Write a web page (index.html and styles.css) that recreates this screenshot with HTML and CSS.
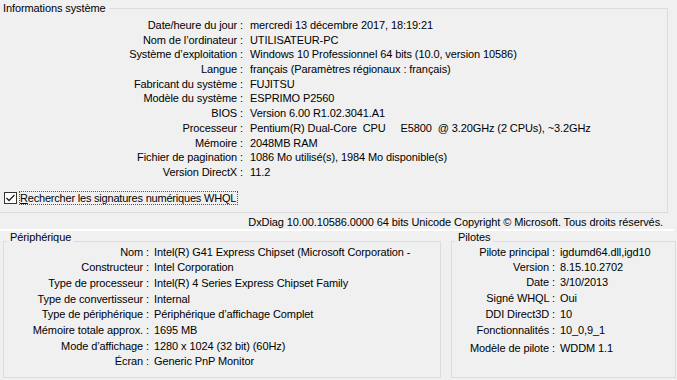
FILE: index.html
```html
<!DOCTYPE html>
<html lang="fr">
<head>
<meta charset="utf-8">
<title>DxDiag</title>
<link rel="stylesheet" href="styles.css">
</head>
<body>
<fieldset class="group group-top">
  <legend class="legend-top">Informations système</legend>
  <div class="grid grid-top">
    <div class="lbl">Date/heure du jour :</div><div class="val">mercredi 13 décembre 2017, 18:19:21</div>
    <div class="lbl">Nom de l’ordinateur :</div><div class="val">UTILISATEUR-PC</div>
    <div class="lbl">Système d’exploitation :</div><div class="val">Windows 10 Professionnel 64 bits (10.0, version 10586)</div>
    <div class="lbl">Langue :</div><div class="val">français (Paramètres régionaux : français)</div>
    <div class="lbl">Fabricant du système :</div><div class="val">FUJITSU</div>
    <div class="lbl">Modèle du système :</div><div class="val">ESPRIMO P2560</div>
    <div class="lbl">BIOS :</div><div class="val">Version 6.00 R1.02.3041.A1</div>
    <div class="lbl">Processeur :</div><div class="val">Pentium(R) Dual-Core&nbsp; CPU&nbsp;&nbsp;&nbsp;&nbsp; E5800&nbsp; @ 3.20GHz (2 CPUs), ~3.2GHz</div>
    <div class="lbl">Mémoire :</div><div class="val">2048MB RAM</div>
    <div class="lbl">Fichier de pagination :</div><div class="val">1086 Mo utilisé(s), 1984 Mo disponible(s)</div>
    <div class="lbl">Version DirectX :</div><div class="val">11.2</div>
  </div>
  <div class="check-row">
    <svg class="checkbox" width="13" height="12" viewBox="0 0 13 12">
      <rect x="0.5" y="0.5" width="12" height="11" fill="#ffffff" stroke="#333333"/>
      <polyline points="2.5,6 5,8.5 10.5,3" fill="none" stroke="#222222" stroke-width="1.3"/>
    </svg>
    <span class="check-label"><u>R</u>echercher les signatures numériques WHQL</span>
  </div>
</fieldset>
<div class="copyright">DxDiag 10.00.10586.0000 64 bits Unicode Copyright © Microsoft. Tous droits réservés.</div>
<div class="sep"></div>
<div class="lower">
  <fieldset class="group group-dev">
    <legend class="legend-low">Périphérique</legend>
    <div class="grid grid-dev">
      <div class="lbl">Nom :</div><div class="val">Intel(R) G41 Express Chipset (Microsoft Corporation -</div>
      <div class="lbl">Constructeur :</div><div class="val">Intel Corporation</div>
      <div class="lbl">Type de processeur :</div><div class="val">Intel(R) 4 Series Express Chipset Family</div>
      <div class="lbl">Type de convertisseur :</div><div class="val">Internal</div>
      <div class="lbl">Type de périphérique :</div><div class="val">Périphérique d’affichage Complet</div>
      <div class="lbl">Mémoire totale approx. :</div><div class="val">1695 MB</div>
      <div class="lbl">Mode d’affichage :</div><div class="val">1280 x 1024 (32 bit) (60Hz)</div>
      <div class="lbl">Écran :</div><div class="val">Generic PnP Monitor</div>
    </div>
  </fieldset>
  <fieldset class="group group-drv">
    <legend class="legend-low">Pilotes</legend>
    <div class="grid grid-drv">
      <div class="lbl">Pilote principal :</div><div class="val">igdumd64.dll,igd10</div>
      <div class="lbl">Version :</div><div class="val">8.15.10.2702</div>
      <div class="lbl">Date :</div><div class="val">3/10/2013</div>
      <div class="lbl">Signé WHQL :</div><div class="val">Oui</div>
      <div class="lbl">DDI Direct3D :</div><div class="val">10</div>
      <div class="lbl">Fonctionnalités :</div><div class="val">10_0,9_1</div>
      <div class="lbl">Modèle de pilote :</div><div class="val">WDDM 1.1</div>
    </div>
  </fieldset>
</div>
</body>
</html>
```
FILE: styles.css
```css
html, body {
  margin: 0;
  padding: 0;
  background: #f0f0f0;
}
body {
  width: 677px;
  height: 380px;
  overflow: hidden;
  font-family: "Liberation Sans", Arial, sans-serif;
  font-size: 11px;
  letter-spacing: -0.1px;
  color: #000;
}
.group {
  margin: 0;
  min-width: 0;
  border: 1px solid #dcdcdc;
  box-sizing: border-box;
}
.group-top {
  margin-right: 9px;
  border-left: none;
  padding: 2px 0 7px 0;
}
.legend-top {
  padding: 0 3px;
  line-height: 16px;
}
.grid {
  display: grid;
  white-space: nowrap;
}
.lbl {
  text-align: right;
}
.grid-top {
  grid-template-columns: 243px 1fr;
  column-gap: 7px;
  grid-auto-rows: 14.7px;
  line-height: 14.7px;
}
.check-row {
  display: flex;
  align-items: center;
  margin-top: 11px;
  padding-left: 4px;
  height: 14px;
}
.checkbox {
  display: block;
}
.check-label {
  margin-left: 2px;
  border: 1px dotted #555;
  line-height: 12px;
  padding: 0 1px 0 0;
  letter-spacing: -0.2px;
}
.copyright {
  margin-top: 3px;
  line-height: 13px;
  text-align: right;
  padding-right: 14px;
}
.sep {
  height: 2px;
  background: #ffffff;
  margin-right: 3px;
}
.lower {
  display: flex;
  gap: 10px;
  padding-left: 3px;
  height: 147px;
}
.legend-low {
  padding: 0 3px 9px 3px;
  margin-left: 3px;
  margin-bottom: -9px;
  line-height: 13px;
}
.group-dev {
  width: 438px;
  padding: 1px 0 6px 0;
}
.group-drv {
  width: 225px;
  padding: 1px 0 6px 0;
}
.grid-dev {
  grid-template-columns: 145px 1fr;
  column-gap: 5px;
  grid-auto-rows: 15.7px;
  line-height: 15.7px;
}
.grid-drv {
  grid-template-columns: 103px 1fr;
  column-gap: 5px;
  grid-template-rows: 15px 15px 15px 17px 15px 17px 19px;
  align-items: center;
  line-height: 15px;
}
```
